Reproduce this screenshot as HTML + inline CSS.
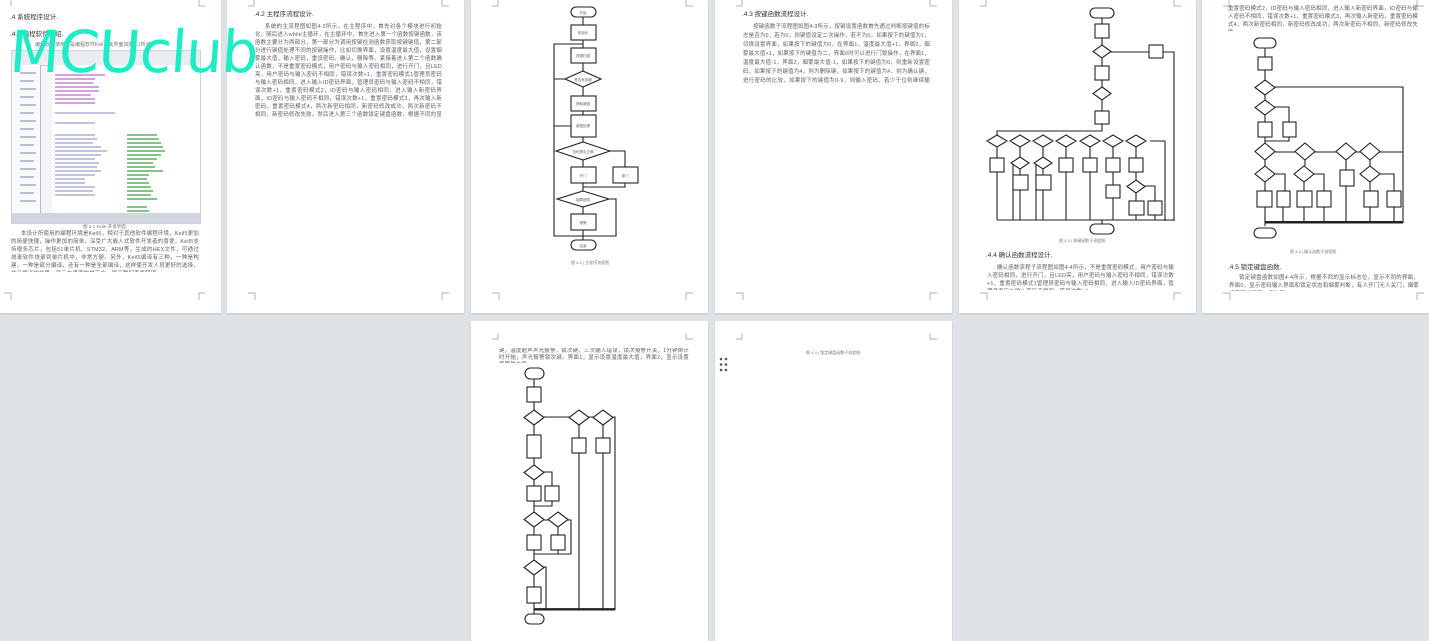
<!DOCTYPE html>
<html><head><meta charset="utf-8"><style>
body{margin:0;width:1429px;height:636px;background:#dfe3e8;position:relative;overflow:hidden;font-family:"Liberation Sans","Noto Sans CJK SC",sans-serif}
.pg{position:absolute;background:#fff;box-shadow:0 1px 2px #c4c8cd;overflow:hidden}
.t{position:absolute;font-size:5.4px;line-height:8px;color:#5a5a68;letter-spacing:0.2px;overflow:hidden;text-align:justify}
.h{position:absolute;font-size:7px;color:#333;white-space:nowrap}
.cap{position:absolute;font-size:4.5px;color:#777;white-space:nowrap}
svg{position:absolute;left:0;top:0}
.wm{position:absolute;left:10px;top:18px;font-size:58px;color:#1eecc6;font-family:"DejaVu Sans",sans-serif;letter-spacing:-1px;transform:skewX(-4deg)}
</style></head><body>

<!-- page 1 -->
<div class="pg" style="left:0;top:0;width:221px;height:313px">
<svg width="221" height="313"><g stroke="#999" fill="none" stroke-width="0.7"><path d="M11 0v6M199 0v6h6M4 293h7v7M199 300v-7h6"/></g></svg>
<div class="h" style="left:10px;top:11px;font-size:6.5px">.4 系統程序设计.</div>
<div class="h" style="left:10px;top:28px;font-size:6.5px">.4.1 编程软件介绍.</div>
<div class="cap" style="left:35px;top:41px;font-size:5px">编程软件使用的是编程软件Keil，其界面如图4-1所示.</div>
<div style="position:absolute;left:11px;top:50px;width:188px;height:172px;background:#f4f5f7;border:1px solid #cfd3d8">
 <div style="position:absolute;left:0;top:0;width:188px;height:14px;background:#e9ecf0;border-bottom:1px solid #ccc"></div>
 <div style="position:absolute;left:0;top:14px;width:28px;height:148px;background:#fafafa;border-right:1px solid #bbb"></div>
 <div style="position:absolute;left:40px;top:14px;width:148px;height:150px;background:#fff"></div>
 <div style="position:absolute;left:0;top:162px;width:188px;height:10px;background:#cfd6e0"></div>
 <svg width="188" height="172"><g stroke-width="1.3">
 <path d="M43 24h50M43 28h40M43 32h38M43 36h44M43 40h44M43 44h36M43 48h40M43 52h40" stroke="#b070c0"/>
 <path d="M43 62h60M43 72h40M43 84h40M43 88h42M43 92h38M43 96h46M43 100h52M43 104h46M43 108h40M43 112h44M43 116h42M43 120h46M43 124h40M43 128h30M43 132h30M43 136h40M43 140h38M43 144h40" stroke="#9aa0c8"/>
 <path d="M115 84h30M115 88h32M115 92h34M115 96h36M115 100h38M115 104h34M115 108h30M115 112h26M115 116h28M115 120h36M115 124h22M115 128h20M115 132h22M115 136h24M115 140h26M115 144h24M115 148h30M115 156h20M115 160h22" stroke="#3aa040"/>
 <path d="M8 22h16M8 30h14M8 38h16M8 46h14M8 54h16M8 62h14M8 70h16M8 78h14M8 86h16M8 94h14M8 102h16M8 110h14M8 118h16M8 126h14M8 134h16M8 142h14M8 150h16" stroke="#8b9dc3"/>
 </g></svg>
</div>
<div class="cap" style="left:83px;top:224px">图 4-1 Keil5 开发界面.</div>
<div class="t" style="left:11px;top:230px;width:188px;height:42px;text-indent:10px">本设计所使用的编程环境是Keil5，相对于其他软件编程环境，Keil5更加的简便快捷，操作更加的简单，深受广大嵌入式软件开发者的喜爱。Keil5支持很多芯片，包括51单片机、STM32、ARM等，生成的HEX文件，可通过烧录软件烧录到单片机中，非常方便。另外，Keil5编译有三种，一种是构建，一种是部分编译，还有一种是全部编译，这样使开发人员更好的选择，并且编译的结果，显示在界面的最下方，便于我们查看错误。</div>
</div>

<!-- page 2 -->
<div class="pg" style="left:227px;top:0;width:237px;height:313px">
<svg width="237" height="313"><g stroke="#999" fill="none" stroke-width="0.7"><path d="M27 0v6h-6M215 0v6h7M21 293h7v7M215 300v-7h7"/></g></svg>
<div class="h" style="left:27px;top:8px;font-size:6.5px">.4.2 主程序流程设计.</div>
<div class="t" style="left:28px;top:23px;width:187px;height:96px;text-indent:10px">系统的主流程图如图4-2所示。在主程序中，首先对各个模块进行初始化，随后进入while主循环，在主循环中，首先进入第一个函数按键函数，该函数主要分为两部分，第一部分为调用按键检测函数获取按键键值，第二部分进行键值处理不同的按键操作，比如切换界面，设置温度最大值，设置烟雾最大值，输入密码，重设密码，确认，删除等。紧接着进入第二个函数确认函数，不是重置密码模式，用户密码与输入密码相同，进行开门，且LED亮，用户密码与输入密码不相同，错误次数+1，重置密码模式1管理员密码与输入密码相同，进入输入ID密码界面，管理员密码与输入密码不相同，错误次数+1，重置密码模式2，ID密码与输入密码相同，进入输入新密码界面，ID密码与输入密码不相同，错误次数+1，重置密码模式3，再次输入新密码，重置密码模式4，两次新密码相同，新密码修改成功，两次新密码不相同，新密码修改失败。然后进入第三个函数锁定键盘函数，根据不同的显示标志位，显示不同的界面，界面0，显示密码输入界面和锁定状态和烟雾判断，界面1，显示设置温度最大值，界面2，显示设置烟雾最大值。</div>
</div>

<div class="wm">MCUclub</div>

<!-- page 3 -->
<div class="pg" style="left:471px;top:0;width:237px;height:313px">
<svg width="237" height="313"><g stroke="#999" fill="none" stroke-width="0.7"><path d="M27 0v6h-6M215 0v6h7M21 293h7v7M215 300v-7h7"/></g>
<g stroke="#222" fill="#fff" stroke-width="1.1">
<path d="M112 17v8M112 40v8M112 63v8M112 87v9M112 111v4M112 137v5M112 160v7M112 183v8M112 207v7M112 230v10" fill="none"/>
<path d="M95 79H83v47h17M112 44H83v192h29M139 151h15v16M154 183v4h-42M134 199h11v37h-33" fill="none"/>
<rect x="100" y="7" width="25" height="10" rx="5"/>
<rect x="100" y="25" width="25" height="15"/><rect x="100" y="48" width="25" height="15"/>
<path d="M112 71l18 8-18 8-18-8z"/>
<rect x="100" y="96" width="25" height="15"/><rect x="100" y="115" width="25" height="22"/>
<path d="M112 142l27 9-27 9-27-9z"/>
<rect x="100" y="167" width="25" height="16"/><rect x="142" y="167" width="25" height="16"/>
<path d="M112 191l26 8-26 8-26-8z"/>
<rect x="100" y="214" width="25" height="16"/>
<rect x="100" y="240" width="25" height="10" rx="5"/>
</g>
<g font-size="3.5" fill="#666" text-anchor="middle"><text x="112" y="14">开始</text><text x="112" y="34">初始化</text><text x="112" y="57">按键扫描</text><text x="112" y="81">是否有按键</text><text x="112" y="105">获取键值</text><text x="112" y="127">键值处理</text><text x="112" y="153">密码是否正确</text><text x="112" y="177">开门</text><text x="154" y="177">锁门</text><text x="112" y="201">烟雾超限</text><text x="112" y="224">报警</text><text x="112" y="247">结束</text></g>
<text x="100" y="264" font-size="4" fill="#777">图 4-2 | 主程序流程图.</text>
</svg>
</div>

<!-- page 4 -->
<div class="pg" style="left:715px;top:0;width:237px;height:313px">
<svg width="237" height="313"><g stroke="#999" fill="none" stroke-width="0.7"><path d="M27 0v6h-6M215 0v6h7M21 293h7v7M215 300v-7h7"/></g></svg>
<div class="h" style="left:27px;top:8px;font-size:6.5px">.4.3 按键函数流程设计.</div>
<div class="t" style="left:28px;top:23px;width:187px;height:63px;line-height:9px;text-indent:10px">按键函数子流程图如图4-3所示，按键设置函数首先通过判断按键值的标志是否为0，若为0，则键值设定二次操作，若不为0，如果按下的键值为1，切换设置界面，如果按下的键值为0，在界面1，温度最大值+1，界面2，烟雾最大值+1，如果按下的键值为二，界面0时可以进行门锁操作，在界面1，温度最大值-1，界面2，烟雾最大值-1，如果按下的键值为0，则重新设置密码，如果按下的键值为4，则为删除键，如果按下的键值为#，则为确认键，进行密码的比较，如果按下的键值为0-9，则输入密码，若少于位则继续输入，若大于位则无效。</div>
</div>

<!-- page 5 -->
<div class="pg" style="left:959px;top:0;width:237px;height:313px">
<svg width="237" height="313"><g stroke="#999" fill="none" stroke-width="0.7"><path d="M27 0v6h-6M215 0v6h7M21 293h7v7M215 300v-7h7"/></g>
<g stroke="#222" fill="#fff" stroke-width="1.1" transform="translate(-959 0)">
<path d="M1102 18v6M1102 38v7M1102 58v8M1102 80v7M1102 100v11M1102 124v7H997v4M1109 52h40M1163 52h11v169M997 147v11M1020 147v10M1043 147v10M1066 147v11M1090 147v11M1113 147v11M1136 147v11M1020 169v6M1043 169v6M1113 172v13M1136 172v8M1136 193v8M1142 186h13v15M1150 141h15v80M997 172v48M1020 190v30M1043 190v30M1066 172v48M1090 172v48M1113 198v22M1136 215v5M1155 215v5M1013 163v57M1036 163v57M997 220h177M1102 220v4" fill="none"/>
<rect x="1090" y="8" width="24" height="10" rx="5"/>
<rect x="1095" y="24" width="14" height="14"/>
<path d="M1102 45l9 6.5-9 6.5-9-6.5z"/>
<rect x="1149" y="45" width="14" height="13"/>
<rect x="1095" y="66" width="14" height="14"/>
<path d="M1102 87l9 6.5-9 6.5-9-6.5z"/>
<rect x="1095" y="111" width="14" height="13"/>
<path d="M997 135l10 6-10 6-10-6zM1020 135l10 6-10 6-10-6zM1043 135l10 6-10 6-10-6zM1066 135l10 6-10 6-10-6zM1090 135l10 6-10 6-10-6zM1113 135l10 6-10 6-10-6zM1136 135l10 6-10 6-10-6z"/>
<rect x="990" y="158" width="14" height="14"/>
<path d="M1020 157l9 6-9 6-9-6zM1043 157l9 6-9 6-9-6z"/>
<rect x="1013" y="175" width="15" height="15"/><rect x="1036" y="175" width="15" height="15"/>
<rect x="1059" y="158" width="14" height="14"/><rect x="1083" y="158" width="14" height="14"/>
<rect x="1106" y="158" width="14" height="14"/><rect x="1129" y="158" width="14" height="14"/>
<rect x="1106" y="185" width="14" height="13"/>
<path d="M1136 180l9 6.5-9 6.5-9-6.5z"/>
<rect x="1129" y="201" width="15" height="14"/><rect x="1148" y="201" width="14" height="14"/>
<rect x="1090" y="224" width="24" height="10" rx="5"/>
</g>
<text x="100" y="242" font-size="4" fill="#777">图 4-3 | 按键函数子流程图.</text>
</svg>
<div class="h" style="left:27px;top:249px;font-size:6.5px">.4.4 确认函数流程设计.</div>
<div class="t" style="left:28px;top:264px;width:187px;height:26px;text-indent:10px">确认函数流程子流程图如图4-4所示，不是重置密码模式，用户密码与输入密码相同，进行开门，且LED亮，用户密码与输入密码不相同，错误次数+1，重置密码模式1管理员密码与输入密码相同，进入输入ID密码界面，管理员密码与输入密码不相同，错误次数+1。</div>
</div>

<!-- page 6 -->
<div class="pg" style="left:1202px;top:0;width:240px;height:313px">
<svg width="240" height="313"><g stroke="#999" fill="none" stroke-width="0.7"><path d="M27 0v6h-6M215 0v6h7M21 293h7v7M215 300v-7h7"/></g>
<g stroke="#222" fill="#fff" stroke-width="1.1" transform="translate(-1202 0)">
<path d="M1265 48v9M1265 70v10M1265 95v5M1265 115v7M1265 137v6M1275 87h128v136M1275 107h14v15M1265 160v6M1265 182v9M1265 207v16M1275 152h128M1305 160v6M1370 160v6M1346 160v10M1346 186v37M1304 182v9M1370 182v9M1275 174h10v17M1314 174h10v17M1380 174h14v17M1283 207v16M1304 207v16M1324 207v16M1370 207v16M1394 207v16M1289 137v4h-24M1265 223h138M1265 223v3" fill="none" stroke-width="1.1"/>
<path d="M1265 222h138" fill="none" stroke-width="2"/>
<rect x="1254" y="38" width="22" height="10" rx="5"/>
<rect x="1258" y="57" width="14" height="13"/>
<path d="M1265 80l10 7.5-10 7.5-10-7.5zM1265 100l10 7.5-10 7.5-10-7.5z"/>
<rect x="1258" y="122" width="14" height="15"/><rect x="1283" y="122" width="13" height="15"/>
<path d="M1265 143l10 8.5-10 8.5-10-8.5zM1305 143l10 8.5-10 8.5-10-8.5zM1346 143l10 8.5-10 8.5-10-8.5zM1370 143l10 8.5-10 8.5-10-8.5z"/>
<path d="M1265 166l10 8-10 8-10-8zM1304 166l10 8-10 8-10-8zM1370 166l10 8-10 8-10-8z"/>
<rect x="1340" y="170" width="14" height="16"/>
<rect x="1257" y="191" width="15" height="16"/><rect x="1277" y="191" width="13" height="16"/><rect x="1297" y="191" width="15" height="16"/><rect x="1317" y="191" width="14" height="16"/><rect x="1364" y="191" width="14" height="16"/><rect x="1387" y="191" width="14" height="16"/>
<rect x="1254" y="228" width="22" height="10" rx="5"/>
</g>
<text x="88" y="253" font-size="4" fill="#777">图 4-4 | 确认函数子流程图.</text>
</svg>
<div class="t" style="left:26px;top:5px;width:190px;height:26px">重置密码模式2，ID密码与输入密码相同，进入输入新密码界面，ID密码与输入密码不相同，错误次数+1，重置密码模式3，再次输入新密码，重置密码模式4，两次新密码相同，新密码修改成功，两次新密码不相同，新密码修改失败。</div>
<div class="h" style="left:26px;top:261px;font-size:6.5px">.4.5 锁定键盘函数.</div>
<div class="t" style="left:27px;top:274px;width:190px;height:17px;text-indent:10px">锁定键盘函数如图4-4所示，根据不同的显示标志位，显示不同的界面，界面0，显示密码输入界面和锁定状态和烟雾判断，有人开门无人关门，烟雾超声声光报警，按次键</div>
</div>

<!-- page 7 -->
<div class="pg" style="left:471px;top:321px;width:237px;height:320px">
<svg width="237" height="320"><g stroke="#999" fill="none" stroke-width="0.7"><path d="M27 12v6h-6M215 12v6h7"/></g>
<g stroke="#222" fill="#fff" stroke-width="1.1" transform="translate(-471 -321)">
<path d="M534 379v8M534 402v8M534 425v10M534 458v7M534 480v6M544 417h25M589 417h4M579 425v13M603 425v13M579 453v157M603 453v157M613 417h2v193M542 472h10v14M534 501v11M552 501v5h-18M544 520h4M534 527v8M534 550v10M558 527v8M568 520h3v34h-37M558 550v4M534 575v12M534 603v7M542 567h4v43M534 610h81M534 610v4" fill="none"/>
<path d="M534 609h81" fill="none" stroke-width="1.8"/>
<rect x="525" y="368" width="19" height="11" rx="5.5"/>
<rect x="527" y="387" width="14" height="15"/>
<path d="M534 410l10 7.5-10 7.5-10-7.5zM579 410l10 7.5-10 7.5-10-7.5zM603 410l10 7.5-10 7.5-10-7.5z"/>
<rect x="572" y="438" width="14" height="15"/><rect x="596" y="438" width="14" height="15"/>
<rect x="527" y="435" width="14" height="23"/>
<path d="M534 465l10 7.5-10 7.5-10-7.5z"/>
<rect x="527" y="486" width="14" height="15"/><rect x="545" y="486" width="14" height="15"/>
<path d="M534 512l10 7.5-10 7.5-10-7.5zM558 512l10 7.5-10 7.5-10-7.5z"/>
<rect x="527" y="535" width="14" height="15"/><rect x="551" y="535" width="14" height="15"/>
<path d="M534 560l10 7.5-10 7.5-10-7.5z"/>
<rect x="527" y="587" width="14" height="16"/>
<rect x="525" y="614" width="19" height="10" rx="5"/>
</g></svg>
<div class="t" style="left:28px;top:27px;width:190px;height:15px;line-height:7px">键，温度超声声光报警，锁次键，三次输入错误，锁次报警开关，1分钟倒计时开始，声光报警锁次键。界面1，显示设置温度最大值，界面2，显示设置烟雾最大值。</div>
</div>

<!-- page 8 -->
<div class="pg" style="left:715px;top:321px;width:237px;height:320px">
<svg width="237" height="320"><g stroke="#999" fill="none" stroke-width="0.7"><path d="M27 12v6h-6M215 12v6h7"/></g>
<g fill="#555"><circle cx="6" cy="38" r="1.3"/><circle cx="11" cy="38" r="1.3"/><circle cx="6" cy="43.5" r="1.3"/><circle cx="11" cy="43.5" r="1.3"/><circle cx="6" cy="49" r="1.3"/><circle cx="11" cy="49" r="1.3"/></g>
<text x="91" y="33" font-size="4" fill="#777">图 4-4 | 锁定键盘函数子流程图.</text>
</svg>
</div>

</body></html>
